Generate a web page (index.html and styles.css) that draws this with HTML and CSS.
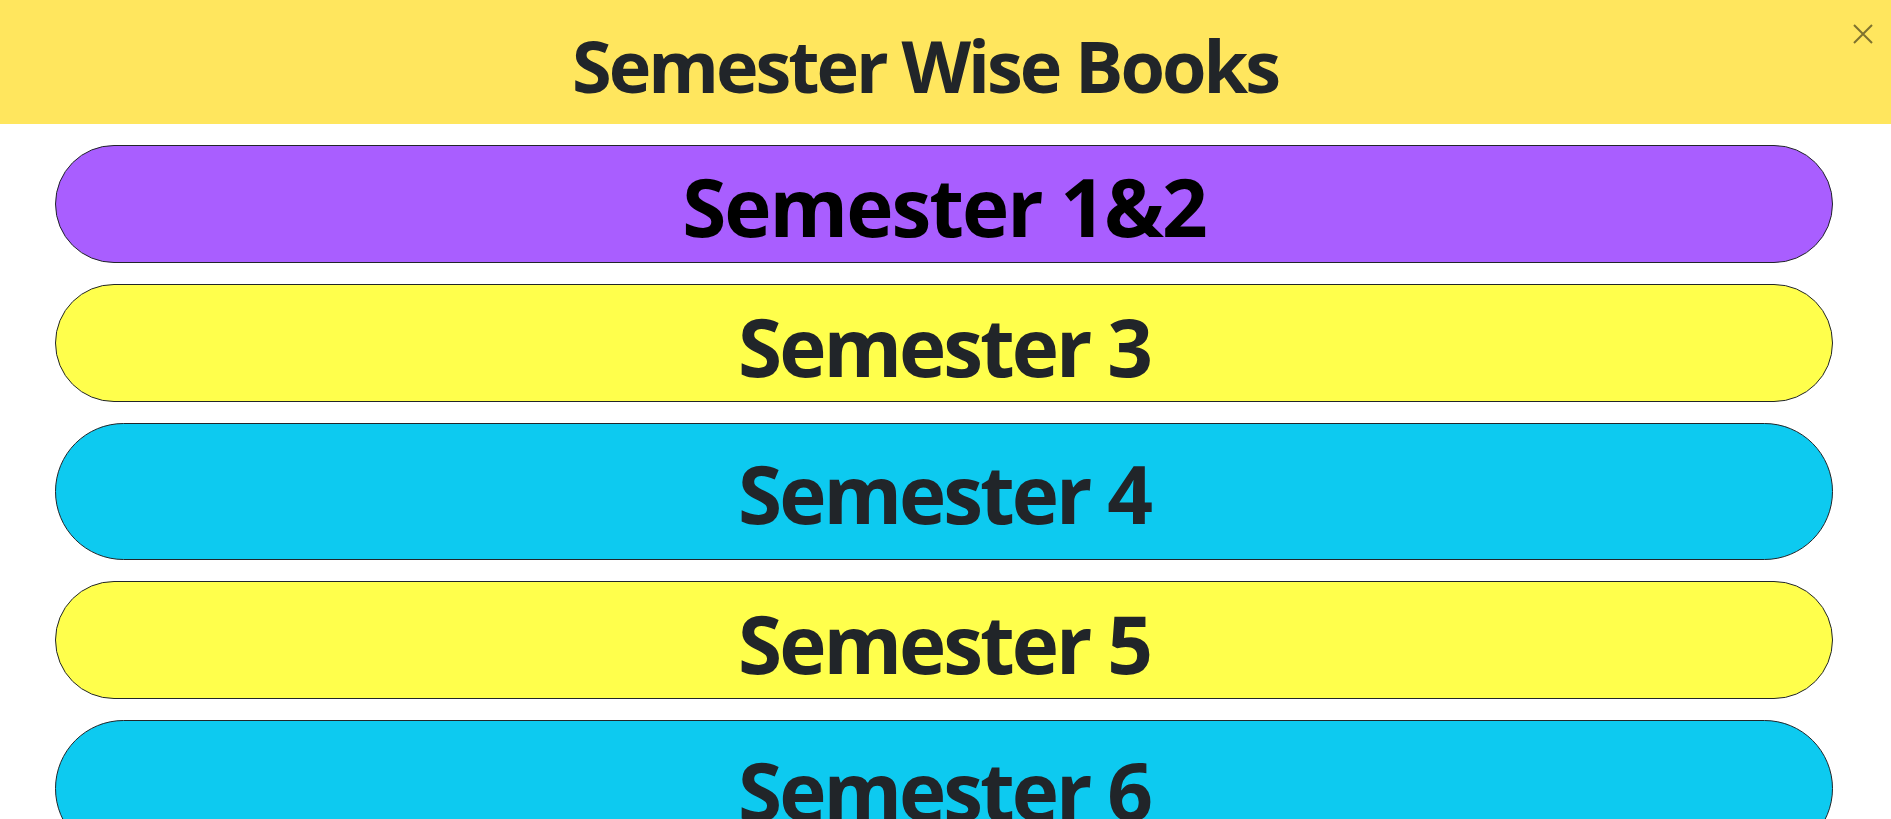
FILE: index.html
```html
<!DOCTYPE html>
<html lang="en">
<head>
<meta charset="utf-8">
<title>Semester Wise Books</title>
<link rel="stylesheet" href="styles.css">
</head>
<body>
<header class="top">
  <h1 class="title">Semester Wise Books</h1>
  <button class="close" aria-label="Close">
    <svg viewBox="0 0 20 20" width="20" height="20"><path d="M1 1 L19 19 M19 1 L1 19" stroke="#000" stroke-width="2" fill="none"/></svg>
  </button>
</header>
<main class="list">
  <a class="sem sem-purple">Semester 1&amp;2</a>
  <a class="sem sem-yellow">Semester 3</a>
  <a class="sem sem-cyan">Semester 4</a>
  <a class="sem sem-yellow">Semester 5</a>
  <a class="sem sem-cyan">Semester 6</a>
</main>
</body>
</html>
```

FILE: styles.css
```css
html, body {
  margin: 0;
  padding: 0;
  background: #ffffff;
  font-family: "Open Sans", "Noto Sans", sans-serif;
  overflow: hidden;
}

.top {
  display: flex;
  align-items: flex-start;
  background: #ffe65e;
  height: 124px;
  box-sizing: border-box;
  padding-top: 22px;
}

.title {
  flex: 1;
  margin: 0;
  text-align: center;
  font-size: 72px;
  line-height: 86px;
  font-weight: 700;
  letter-spacing: -3px;
  color: #212529;
}

.close {
  width: 26px;
  height: 26px;
  margin: -1px 15px 0 0;
  padding: 3px;
  border: 0;
  background: transparent;
  opacity: 0.5;
  display: flex;
  align-items: center;
  justify-content: center;
}

.close svg {
  display: block;
}

.list {
  display: flex;
  flex-direction: column;
  gap: 21px;
  padding: 21px 58px 0 55px;
}

.sem {
  display: block;
  box-sizing: border-box;
  border: 1px solid #212529;
  border-radius: 999px;
  text-align: center;
  font-weight: 700;
  font-size: 80px;
  line-height: 96px;
  letter-spacing: -3px;
  color: #212529;
  flex: none;
}

.sem-purple {
  background: #a95eff;
  color: #000;
  letter-spacing: -2px;
  height: 118px;
  padding-top: 12px;
}

.sem-yellow {
  background: #ffff4c;
  height: 118px;
  padding-top: 13px;
}

.sem-cyan {
  background: #0dcaf0;
  height: 137px;
  padding-top: 21px;
}
```
